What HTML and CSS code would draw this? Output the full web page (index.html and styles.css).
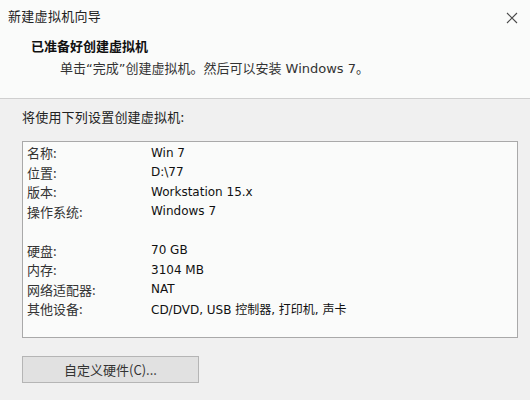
FILE: index.html
```html
<!DOCTYPE html>
<html lang="zh-CN">
<head>
<meta charset="utf-8">
<title>新建虚拟机向导</title>
<link rel="stylesheet" href="styles.css">
</head>
<body>
<div class="window">
  <div class="header">
    <div class="titlebar">
      <span class="title">新建虚拟机向导</span>
      <svg class="close" width="12" height="12" viewBox="0 0 12 12"><path d="M1 1L11 11M11 1L1 11" stroke="#4a4a4a" stroke-width="1.1" fill="none"/></svg>
    </div>
    <div class="heading">已准备好创建虚拟机</div>
    <div class="subheading">单击“完成”创建虚拟机。然后可以安装 Windows 7。</div>
  </div>
  <div class="content">
    <div class="intro">将使用下列设置创建虚拟机:</div>
    <div class="summary">
      <div class="row"><span class="label">名称:</span><span class="value">Win 7</span></div>
      <div class="row"><span class="label">位置:</span><span class="value">D:\77</span></div>
      <div class="row"><span class="label">版本:</span><span class="value">Workstation 15.x</span></div>
      <div class="row"><span class="label">操作系统:</span><span class="value">Windows 7</span></div>
      <div class="row blank"></div>
      <div class="row"><span class="label">硬盘:</span><span class="value">70 GB</span></div>
      <div class="row"><span class="label">内存:</span><span class="value">3104 MB</span></div>
      <div class="row"><span class="label">网络适配器:</span><span class="value">NAT</span></div>
      <div class="row"><span class="label">其他设备:</span><span class="value">CD/DVD, USB 控制器, 打印机, 声卡</span></div>
    </div>
    <button class="btn">自定义硬件(C)...</button>
  </div>
</div>
</body>
</html>
```
FILE: styles.css
```css
* { box-sizing: border-box; }
html, body { margin: 0; padding: 0; }
body {
  width: 530px;
  height: 400px;
  overflow: hidden;
  background: #f0f0f0;
  font-family: "Noto Sans CJK SC", "DejaVu Sans", sans-serif;
  color: #1a1a1a;
}
.window { display: flex; flex-direction: column; height: 400px; }
.header {
  height: 99px;
  background: #fafbfa;
  border-bottom: 1px solid #cfcfcf;
  display: flex;
  flex-direction: column;
}
.titlebar {
  display: flex;
  justify-content: space-between;
  align-items: center;
  padding: 5px 12px 0 8px;
  height: 26px;
}
.title { font-size: 13px; color: #222; letter-spacing: 0.3px; }
.close { margin-top: 5px; }
.heading {
  margin-top: 11px;
  padding-left: 31px;
  font-size: 13px;
  font-weight: bold;
  color: #111;
  letter-spacing: 0;
  line-height: 18px;
}
.subheading {
  margin-top: 5px;
  padding-left: 60px;
  font-family: "DejaVu Sans", "Noto Sans CJK SC", sans-serif;
  font-size: 13px;
  color: #333;
  line-height: 18px;
}
.content {
  flex: 1;
  padding: 9px 12px 0 22px;
  display: flex;
  flex-direction: column;
  align-items: flex-start;
}
.intro { font-size: 13px; color: #222; line-height: 18px; letter-spacing: 0.2px; }
.summary {
  margin-top: 15px;
  width: 496px;
  height: 197px;
  background: #fafbfa;
  border: 1px solid #a9a9a9;
  padding: 1px 0 0 4px;
}
.row {
  display: flex;
  height: 19.5px;
  align-items: center;
  font-size: 13px;
}
.label { width: 124px; color: #333; }
.value { font-family: "DejaVu Sans", "Noto Sans CJK SC", sans-serif; font-size: 12px; color: #111; }
.btn {
  margin-top: 18px;
  width: 177px;
  height: 27px;
  background: #e1e1e1;
  border: 1px solid #b5b5b5;
  font-family: "Noto Sans CJK SC", "DejaVu Sans", sans-serif;
  font-size: 13px;
  color: #333;
  padding: 0;
}
```
